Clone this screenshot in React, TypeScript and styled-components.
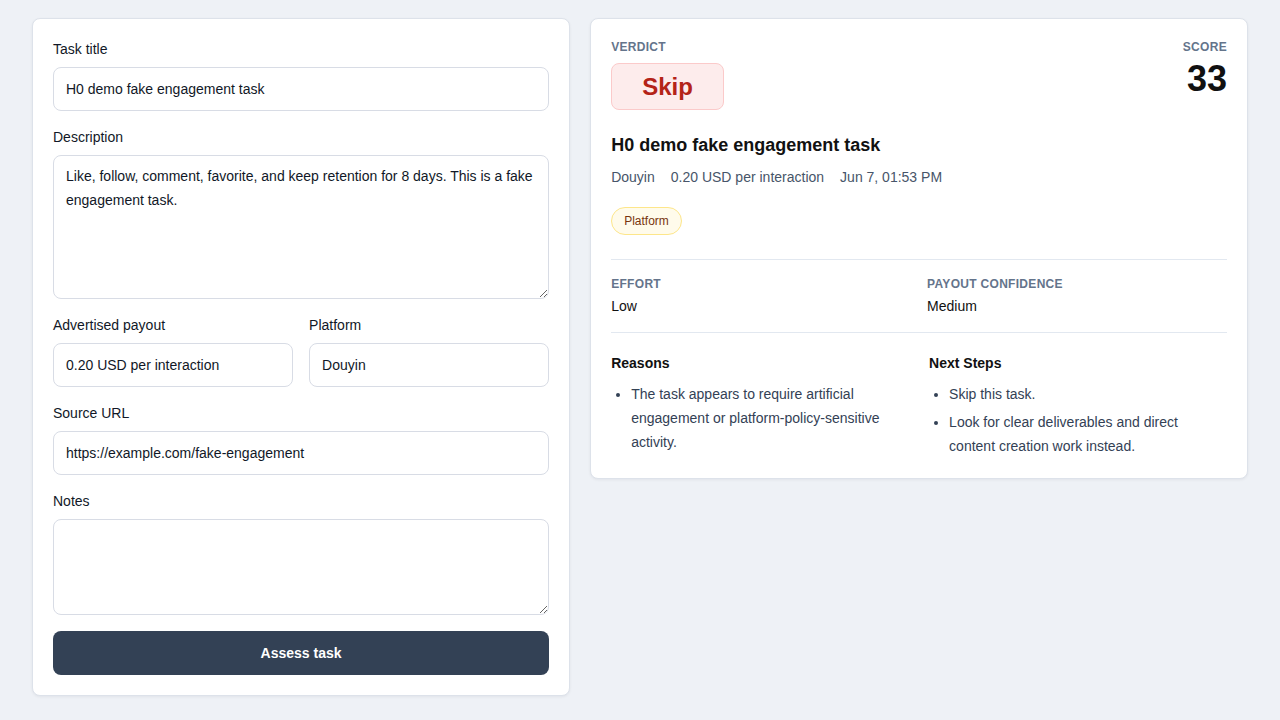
import styled, { createGlobalStyle } from 'styled-components';

const GlobalStyle = createGlobalStyle`
    * {
        box-sizing: border-box;
    }
    body {
        margin: 0;
        background-color: #eef1f6;
        font-family: "Liberation Sans", Arial, sans-serif;
        color: #111827;
    }
`;

const Page = styled.div`
    display: grid;
    grid-template-columns: 9fr 11fr;
    gap: 20px;
    align-items: start;
    padding: 18px 32px;
    min-height: 720px;
`;

const Card = styled.div`
    background-color: #ffffff;
    border: 1px solid #dde2ea;
    border-radius: 8px;
    padding: 20px;
    box-shadow: 0px 1px 3px 0px rgba(15, 23, 42, 0.06);
`;

const Form = styled.form`
    display: flex;
    flex-direction: column;
    gap: 16px;
`;

const Field = styled.label`
    display: flex;
    flex-direction: column;
    gap: 8px;
    font-size: 14px;
    line-height: 20px;
    color: #111827;
`;

const FieldRow = styled.div`
    display: grid;
    grid-template-columns: 1fr 1fr;
    gap: 16px;
`;

const TextInput = styled.input`
    width: 100%;
    height: 44px;
    border: 1px solid #d8dce5;
    border-radius: 8px;
    padding: 0 12px;
    font-family: inherit;
    font-size: 14px;
    color: #111827;
    background-color: #ffffff;
`;

const TextArea = styled.textarea<{ $height: number }>`
    width: 100%;
    height: ${props => props.$height}px;
    border: 1px solid #d8dce5;
    border-radius: 8px;
    padding: 8px 12px;
    font-family: inherit;
    font-size: 14px;
    line-height: 24px;
    color: #111827;
    background-color: #ffffff;
    resize: vertical;
`;

const SubmitButton = styled.button`
    width: 100%;
    height: 44px;
    border: none;
    border-radius: 8px;
    background-color: #334155;
    color: #ffffff;
    font-family: inherit;
    font-size: 14px;
    font-weight: bold;
    cursor: pointer;
`;

const ResultHeader = styled.div`
    display: flex;
    justify-content: space-between;
    align-items: flex-start;
`;

const Eyebrow = styled.div<{ $align?: string }>`
    font-size: 12px;
    line-height: 16px;
    font-weight: bold;
    letter-spacing: 0.3px;
    text-transform: uppercase;
    color: #64748b;
    text-align: ${props => props.$align || 'left'};
`;

const VerdictBadge = styled.div`
    display: inline-block;
    margin-top: 8px;
    padding: 7px 30px;
    border: 1px solid #fbcaca;
    border-radius: 8px;
    background-color: #fdecec;
    color: #b42318;
    font-size: 24px;
    line-height: 31px;
    font-weight: bold;
`;

const ScoreValue = styled.div`
    margin-top: 4px;
    font-size: 36px;
    line-height: 40px;
    font-weight: bold;
    color: #111111;
    text-align: right;
`;

const TaskTitle = styled.h2`
    margin: 23px 0 0;
    font-size: 18px;
    line-height: 24px;
    font-weight: bold;
    color: #111111;
`;

const MetaRow = styled.div`
    display: flex;
    gap: 16px;
    margin-top: 10px;
    font-size: 14px;
    line-height: 20px;
    color: #475569;
`;

const Tags = styled.div`
    display: flex;
    gap: 8px;
    margin-top: 20px;
`;

const Tag = styled.span`
    display: inline-block;
    padding: 5px 12px;
    border: 1px solid #fde68a;
    border-radius: 999px;
    background-color: #fffbeb;
    color: #78350f;
    font-size: 12px;
    line-height: 16px;
`;

const Section = styled.div<{ $top: number; $gap: number }>`
    display: grid;
    grid-template-columns: 1fr 1fr;
    gap: ${props => props.$gap}px;
    margin-top: ${props => props.$top}px;
    padding-top: 16px;
    border-top: 1px solid #e2e8f0;
`;

const StatValue = styled.div`
    margin-top: 4px;
    font-size: 14px;
    line-height: 20px;
    color: #111111;
`;

const ListBlock = styled.div`
    padding-top: 4px;
`;

const ListTitle = styled.h3`
    margin: 0;
    font-size: 14px;
    line-height: 20px;
    font-weight: bold;
    color: #111111;
`;

const List = styled.ul`
    margin: 9px 0 0;
    padding: 0 8px 0 20px;
    display: flex;
    flex-direction: column;
    gap: 4px;

    li {
        font-size: 14px;
        line-height: 24px;
        color: #334155;
    }
`;

export default function App(): JSX.Element {
    return (
        <>
            <GlobalStyle />
            <Page>
                <Card>
                    <Form onSubmit={e => e.preventDefault()}>
                        <Field>
                            Task title
                            <TextInput defaultValue="H0 demo fake engagement task" />
                        </Field>
                        <Field>
                            Description
                            <TextArea
                                $height={144}
                                defaultValue="Like, follow, comment, favorite, and keep retention for 8 days. This is a fake engagement task."
                            />
                        </Field>
                        <FieldRow>
                            <Field>
                                Advertised payout
                                <TextInput defaultValue="0.20 USD per interaction" />
                            </Field>
                            <Field>
                                Platform
                                <TextInput defaultValue="Douyin" />
                            </Field>
                        </FieldRow>
                        <Field>
                            Source URL
                            <TextInput defaultValue="https://example.com/fake-engagement" />
                        </Field>
                        <Field>
                            Notes
                            <TextArea $height={96} defaultValue="" />
                        </Field>
                        <SubmitButton type="submit">Assess task</SubmitButton>
                    </Form>
                </Card>

                <Card>
                    <ResultHeader>
                        <div>
                            <Eyebrow>Verdict</Eyebrow>
                            <VerdictBadge>Skip</VerdictBadge>
                        </div>
                        <div>
                            <Eyebrow $align="right">Score</Eyebrow>
                            <ScoreValue>33</ScoreValue>
                        </div>
                    </ResultHeader>

                    <TaskTitle>H0 demo fake engagement task</TaskTitle>
                    <MetaRow>
                        <span>Douyin</span>
                        <span>0.20 USD per interaction</span>
                        <span>Jun 7, 01:53 PM</span>
                    </MetaRow>
                    <Tags>
                        <Tag>Platform</Tag>
                    </Tags>

                    <Section $top={24} $gap={16}>
                        <div>
                            <Eyebrow>Effort</Eyebrow>
                            <StatValue>Low</StatValue>
                        </div>
                        <div>
                            <Eyebrow>Payout confidence</Eyebrow>
                            <StatValue>Medium</StatValue>
                        </div>
                    </Section>

                    <Section $top={16} $gap={20}>
                        <ListBlock>
                            <ListTitle>Reasons</ListTitle>
                            <List>
                                <li>The task appears to require artificial engagement or platform-policy-sensitive activity.</li>
                            </List>
                        </ListBlock>
                        <ListBlock>
                            <ListTitle>Next Steps</ListTitle>
                            <List>
                                <li>Skip this task.</li>
                                <li>Look for clear deliverables and direct content creation work instead.</li>
                            </List>
                        </ListBlock>
                    </Section>
                </Card>
            </Page>
        </>
    );
}
